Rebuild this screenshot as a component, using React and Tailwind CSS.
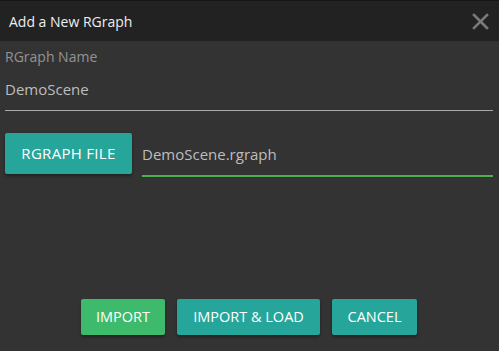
import React from 'react';

const font = { fontFamily: '"Open Sans", "Noto Sans", sans-serif' };

const App = () => {
  return (
    <div style={font} className="flex h-[351px] w-[499px] flex-col overflow-hidden bg-[#333333]">
      <header className="flex h-[41px] shrink-0 items-center justify-between border-t border-[#161616] bg-[#222222] pl-[9px] pr-[10px]">
        <h1 className="text-[14px] text-[#eeeeee]">Add a New RGraph</h1>
        <svg width="17" height="17" viewBox="0 0 17 17" className="text-[#7a7a7a]">
          <path d="M2 2 L15 15 M15 2 L2 15" stroke="currentColor" strokeWidth="2.6" strokeLinecap="square" />
        </svg>
      </header>

      <main className="flex flex-1 flex-col pl-[5px] pr-[6px]">
        <label className="mt-[7px] text-[14px] leading-[18px] text-[#939393]">RGraph Name</label>
        <div className="mt-[12px] border-b border-[#a8a8a8] pb-[10px] text-[15px] leading-[22px] text-[#bdbdbd]">
          DemoScene
        </div>

        <div className="mt-[22px] flex items-start gap-[10px]">
          <button
            type="button"
            className="h-[41px] w-[127px] rounded-[2px] bg-[#26a69a] text-[15px] tracking-[0.3px] text-white shadow-[0_2px_3px_rgba(0,0,0,0.35)]"
          >
            RGRAPH FILE
          </button>
          <div className="flex-1 border-b-2 border-[#4caf50] pb-[10px] pt-[10px] text-[15px] leading-[22px] text-[#bdbdbd]">
            DemoScene.rgraph
          </div>
        </div>

        <div className="mt-auto mb-[16px] flex justify-center gap-[12px]">
          <button
            type="button"
            className="h-[36px] w-[84px] rounded-[2px] bg-[#3dba6b] text-[14.5px] text-white shadow-[0_2px_3px_rgba(0,0,0,0.35)]"
          >
            IMPORT
          </button>
          <button
            type="button"
            className="h-[36px] w-[143px] rounded-[2px] bg-[#26a69a] text-[14.5px] text-white shadow-[0_2px_3px_rgba(0,0,0,0.35)]"
          >
            IMPORT &amp; LOAD
          </button>
          <button
            type="button"
            className="h-[36px] w-[85px] rounded-[2px] bg-[#26a69a] text-[14.5px] text-white shadow-[0_2px_3px_rgba(0,0,0,0.35)]"
          >
            CANCEL
          </button>
        </div>
      </main>
    </div>
  );
};

export default App;
